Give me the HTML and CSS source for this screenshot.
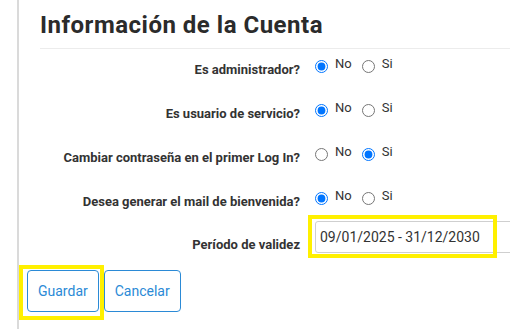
FILE: index.html
```html
<!DOCTYPE html>
<html lang="es">
<head>
<meta charset="utf-8">
<title>Información de la Cuenta</title>
<link rel="stylesheet" href="styles.css">
</head>
<body>
<div class="page">
  <div class="panel">
    <h2 class="title">Información de la Cuenta</h2>
    <hr class="rule">
    <form class="form">
      <div class="row radio-row">
        <label class="lbl">Es administrador?</label>
        <div class="opts">
          <label class="opt"><input type="radio" name="admin" checked><span>No</span></label>
          <label class="opt"><input type="radio" name="admin"><span>Si</span></label>
        </div>
      </div>
      <div class="row radio-row">
        <label class="lbl">Es usuario de servicio?</label>
        <div class="opts">
          <label class="opt"><input type="radio" name="servicio" checked><span>No</span></label>
          <label class="opt"><input type="radio" name="servicio"><span>Si</span></label>
        </div>
      </div>
      <div class="row radio-row">
        <label class="lbl">Cambiar contraseña en el primer Log In?</label>
        <div class="opts">
          <label class="opt"><input type="radio" name="pass"><span>No</span></label>
          <label class="opt"><input type="radio" name="pass" checked><span>Si</span></label>
        </div>
      </div>
      <div class="row radio-row">
        <label class="lbl">Desea generar el mail de bienvenida?</label>
        <div class="opts">
          <label class="opt"><input type="radio" name="mail" checked><span>No</span></label>
          <label class="opt"><input type="radio" name="mail"><span>Si</span></label>
        </div>
      </div>
      <div class="row input-row">
        <label class="lbl">Período de validez</label>
        <div class="ctrl">
          <div class="clip">
            <input class="date" type="text" value="09/01/2025 - 31/12/2030">
          </div>
          <span class="mark mark-date"></span>
        </div>
      </div>
    </form>
    <div class="actions">
      <span class="mark-wrap">
        <button class="btn" type="button">Guardar</button>
        <span class="mark mark-save"></span>
      </span>
      <button class="btn" type="button">Cancelar</button>
    </div>
  </div>
</div>
</body>
</html>
```

FILE: styles.css
```css
html, body {
  margin: 0;
  padding: 0;
}
body {
  font-family: Roboto, "Liberation Sans", Arial, sans-serif;
  color: #333;
  background: #fff;
  overflow: hidden;
}
.page {
  padding-left: 17px;
  height: 329px;
}
.panel {
  border-left: 2px solid #dadada;
  height: 100%;
  padding-left: 8px;
}
.title {
  margin: 0 0 0 13px;
  padding-top: 10px;
  font-size: 24px;
  line-height: 30px;
  font-weight: 700;
  letter-spacing: 0.5px;
  color: #2b2b2b;
}
.rule {
  margin: 8px 0 0 13px;
  border: 0;
  border-top: 1px solid #ececec;
  height: 0;
}
.form {
  margin-left: 13px;
  display: flex;
  flex-direction: column;
}
.row {
  display: grid;
  grid-template-columns: 260px 1fr;
  column-gap: 15px;
}
.radio-row {
  height: 44px;
}
.lbl {
  text-align: right;
  font-weight: 700;
  font-size: 13px;
  line-height: 18px;
  padding-top: 12px;
  color: #333;
  white-space: nowrap;
}
.opts {
  display: flex;
  padding-top: 7px;
}
.opt {
  display: inline-flex;
  align-items: flex-start;
  gap: 7px;
  margin-right: 10px;
  font-size: 13px;
  line-height: 16px;
  color: #333;
}
.opt input {
  width: 13px;
  height: 13px;
  margin: 4px 0 0 0;
}
.input-row {
  margin-top: -4px;
}
.input-row .lbl {
  padding-top: 15px;
}
.ctrl {
  position: relative;
  min-width: 0;
}
.clip {
  overflow: hidden;
}
.date {
  display: block;
  box-sizing: border-box;
  width: 230px;
  height: 32px;
  margin: 0;
  padding: 5px 4px;
  border: 1px solid #cfcfcf;
  border-radius: 3px;
  font-family: Roboto, "Liberation Sans", Arial, sans-serif;
  font-size: 14px;
  line-height: 20px;
  color: #333;
  background: #fff;
}
.mark-wrap {
  position: relative;
  display: inline-block;
  vertical-align: top;
}
.mark {
  position: absolute;
  border: 4px solid #fff000;
  box-sizing: border-box;
  pointer-events: none;
}
.mark-date {
  left: -7px;
  top: -6px;
  width: 189px;
  height: 43px;
}
.actions {
  margin-top: 16px;
  display: flex;
  gap: 5px;
}
.btn {
  display: block;
  margin: 0;
  padding: 10px 10px;
  border: 1px solid #2b8ad6;
  border-radius: 4px;
  background: #fff;
  color: #2b8ad6;
  font-family: Roboto, "Liberation Sans", Arial, sans-serif;
  font-size: 14px;
  line-height: 20px;
}
.mark-save {
  left: -8px;
  top: -5px;
  width: 85px;
  height: 55px;
}
```
